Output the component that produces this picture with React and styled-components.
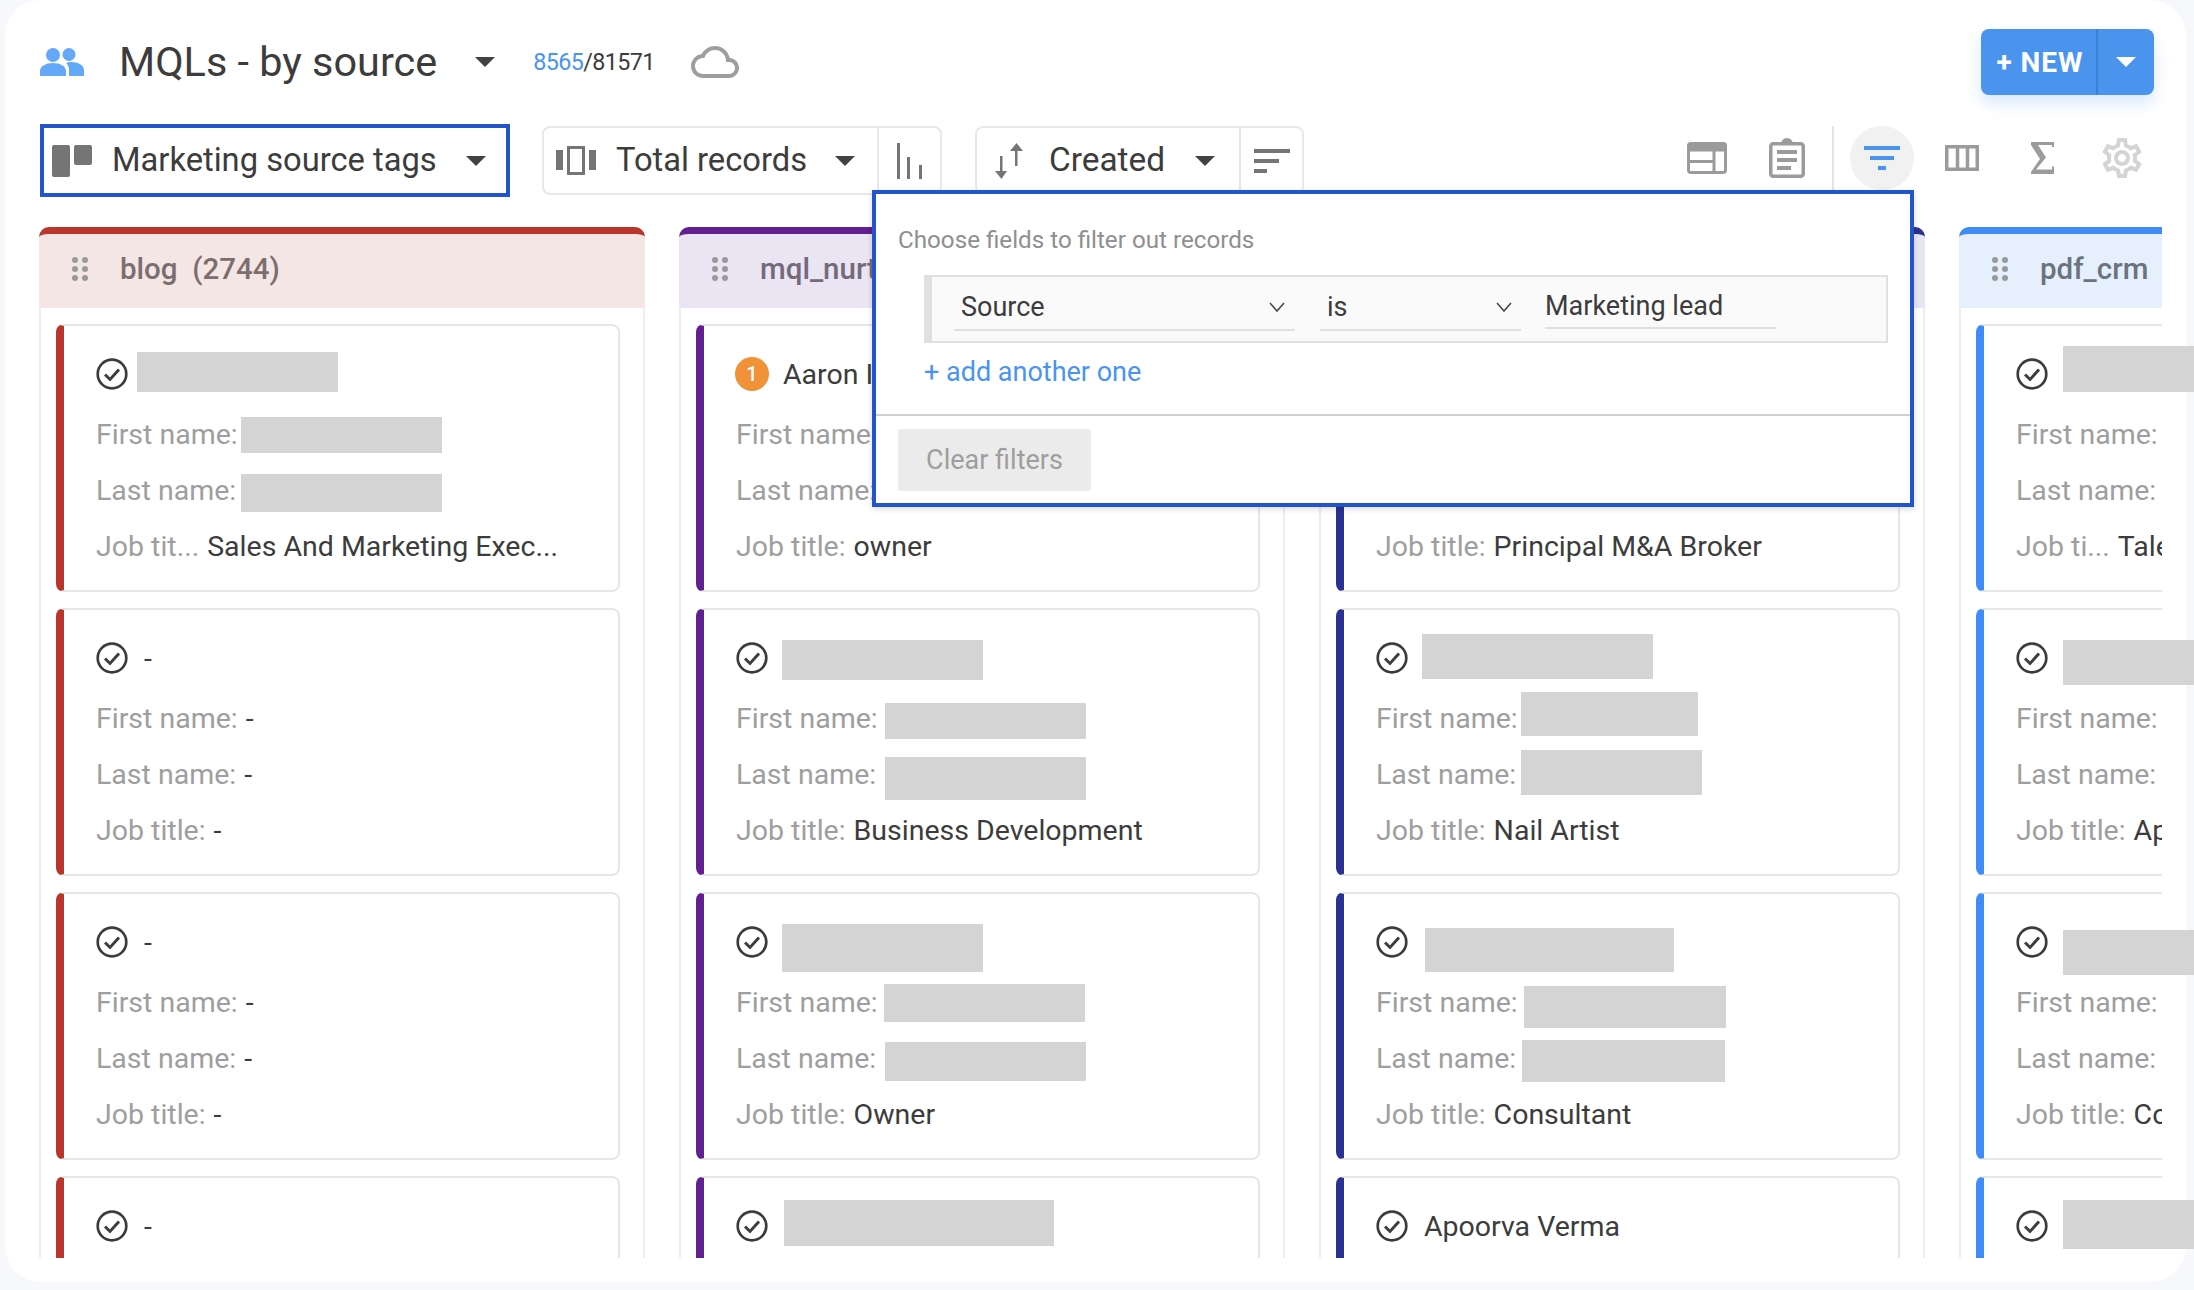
import React from "react";
import styled, { createGlobalStyle } from "styled-components";
import { MdOutlineSettings, MdCloudQueue } from "react-icons/md";

const Global = createGlobalStyle`
  html, body { margin: 0; padding: 0; background: #f7f8fc; }
  body { font-family: Roboto, "Liberation Sans", sans-serif; color: #3c3c3c; }
  * { box-sizing: border-box; }
`;

const Page = styled.div`
  position: relative;
  width: 2181px;
  height: 1282px;
  margin-left: 5px;
  padding-top: 29px;
  background: #fff;
  border-radius: 36px;
`;
const Frame = styled.div`
  width: 2194px;
  height: 1290px;
  overflow: hidden;
  position: relative;
`;
const Header = styled.header`
  display: flex;
  align-items: center;
  height: 66px;
  padding: 0 32px 0 35px;
`;
const Title = styled.h1`
  margin: 0 0 0 35px;
  font-size: 41.4px;
  font-weight: 400;
  color: #3c3c3c;
`;
const Counter = styled.div`
  margin-left: 38px;
  font-size: 23.3px;
  letter-spacing: -0.6px;
  color: #3c3c3c;
  span { color: #4a94ee; }
`;
const CloudWrap = styled.div`
  display: flex;
  margin-left: 36px;
  color: #9e9e9e;
`;
const NewButton = styled.div`
  display: flex;
  align-items: center;
  margin-left: auto;
  width: 173px;
  height: 66px;
  background: #4a94ee;
  border-radius: 8px;
  box-shadow: 0 8px 16px rgba(74, 148, 238, 0.22);
  color: #fff;
  font-size: 28px;
  font-weight: 700;
`;
const NewLabel = styled.div`
  width: 117px;
  height: 100%;
  display: flex;
  align-items: center;
  justify-content: center;
  padding-left: 3px;
  letter-spacing: 1px;
  border-right: 2px solid rgba(40, 90, 160, 0.35);
`;
const NewArrow = styled.div`
  flex: 1;
  display: flex;
  align-items: center;
  justify-content: center;
`;
const Caret = styled.span`
  display: inline-block;
  width: 0;
  height: 0;
  flex: none;
  border-left: 10px solid transparent;
  border-right: 10px solid transparent;
  border-top: 10px solid ${(p) => p.$color || "#424242"};
  margin-left: ${(p) => p.$ml || 0}px;
`;
const Toolbar = styled.div`
  display: flex;
  align-items: center;
  height: 73px;
  margin-top: 29px;
  padding: 0 24px 0 35px;
  gap: 32px;
`;
const Picker = styled.div`
  display: flex;
  align-items: center;
  width: 470px;
  height: 73px;
  padding-left: 8px;
  border: 4px solid #2255cc;
  font-size: 32.7px;
`;
const Group = styled.div`
  display: flex;
  align-items: stretch;
  height: 69px;
  width: ${(p) => p.$w}px;
  margin-left: ${(p) => p.$ml || 0}px;
  border: 2px solid #e8e8e8;
  border-radius: 8px;
  font-size: ${(p) => p.$fs}px;
`;
const GroupMain = styled.div`
  display: flex;
  align-items: center;
  flex: 1;
  padding-left: ${(p) => p.$pl}px;
`;
const GroupEnd = styled.div`
  display: flex;
  align-items: center;
  justify-content: center;
  width: ${(p) => p.$w}px;
  border-left: 2px solid #e8e8e8;
`;
const GroupLabel = styled.span`
  margin: -2px 0 0 ${(p) => p.$ml}px;
`;
const Actions = styled.div`
  display: flex;
  align-items: center;
  height: 64px;
  margin: 0 0 5px auto;
`;
const Slot = styled.div`
  display: flex;
  align-items: center;
  justify-content: center;
  width: 80px;
  height: 64px;
`;
const ActionDivider = styled.div`
  width: 2px;
  height: 64px;
  margin: 0 16px 0 5px;
  background: #e4e4e4;
`;
const FilterSlot = styled.div`
  display: flex;
  align-items: center;
  justify-content: center;
  width: 64px;
  height: 64px;
  margin-right: 8px;
  border-radius: 50%;
  background: #f1f1f1;
`;
const Board = styled.div`
  display: flex;
  align-items: flex-start;
  gap: 34px;
  width: 2123px;
  height: 1031px;
  margin: 30px 0 0 34px;
  overflow: hidden;
`;
const Column = styled.section`
  flex: none;
  width: 606px;
  height: 1300px;
  border: solid #eeeeee;
  border-width: 0 2px;
  border-radius: 10px 10px 0 0;
`;
const ColumnHead = styled.div`
  display: flex;
  align-items: center;
  height: 81px;
  margin: 0 -2px;
  padding: 0 0 4px 33px;
  background: ${(p) => p.$bg};
  border-top: 7px solid ${(p) => p.$color};
  border-radius: 10px 10px 0 0;
  color: ${(p) => p.$text};
  font-size: 29.5px;
  font-weight: 500;
`;
const ColumnName = styled.span`
  margin-left: 32px;
  white-space: pre;
`;
const CardList = styled.div`
  display: flex;
  flex-direction: column;
  gap: 16px;
  padding: 16px 23px 0 15px;
`;
const Card = styled.article`
  flex: none;
  height: 268px;
  padding: 28px 10px 0 33px;
  background: #fff;
  border: 2px solid #e6e6e6;
  border-left: 8px solid ${(p) => p.$color};
  border-radius: 8px;
  font-size: 28.5px;
`;
const CardTitle = styled.div`
  display: flex;
  align-items: center;
  gap: 16px;
  height: 40px;
  margin: 0 0 12px -1px;
  white-space: nowrap;
`;
const Badge = styled.span`
  display: flex;
  align-items: center;
  justify-content: center;
  flex: none;
  width: 34px;
  height: 34px;
  margin: 0 -2px 0 -1px;
  border-radius: 50%;
  background: #ef9238;
  color: #fff;
  font-size: 20px;
  font-weight: 500;
`;
const Field = styled.div`
  display: flex;
  align-items: center;
  gap: 8px;
  height: 56px;
  margin-left: -1px;
  white-space: nowrap;
`;
const Label = styled.span`
  color: #9e9e9e;
`;
const Redaction = styled.div.attrs((p) => ({
  style: { left: p.$x - 5, top: p.$y, width: p.$w, height: p.$h },
}))`
  position: absolute;
  background: #d4d4d4;
`;
const Popover = styled.div`
  position: absolute;
  left: 867px;
  top: 190px;
  width: 1042px;
  height: 317px;
  background: #fff;
  border: 4px solid #2255cc;
  box-shadow: 0 2px 6px rgba(0, 0, 0, 0.15);
`;
const PopoverBody = styled.div`
  height: 222px;
  padding: 31px 22px 0 22px;
  border-bottom: 2px solid #d0d0d0;
`;
const Hint = styled.div`
  font-size: 24.2px;
  line-height: 30px;
  color: #8f8f8f;
`;
const FilterRow = styled.div`
  display: flex;
  align-items: stretch;
  height: 68px;
  margin: 20px 0 0 26px;
  padding: 0 0 0 22px;
  background: #fafafa;
  border: 2px solid #e0e0e0;
  border-left-width: 8px;
  font-size: 27px;
`;
const SelectField = styled.div`
  display: flex;
  align-items: center;
  justify-content: space-between;
  width: ${(p) => p.$w}px;
  height: 54px;
  margin-right: ${(p) => p.$mr}px;
  padding: 7px ${(p) => p.$pr}px 0 7px;
  border-bottom: 2px solid #e0e0e0;
`;
const ValueField = styled.div`
  display: flex;
  align-items: center;
  width: 231px;
  height: 52px;
  padding-top: 7px;
  border-bottom: 2px solid #e0e0e0;
`;
const AddLink = styled.div`
  margin: 12px 0 0 26px;
  font-size: 27px;
  line-height: 34px;
  color: #4a94ee;
`;
const PopoverFoot = styled.div`
  padding: 13px 22px;
`;
const ClearButton = styled.div`
  display: flex;
  align-items: center;
  justify-content: center;
  width: 193px;
  height: 62px;
  background: #ebebeb;
  border-radius: 3px;
  color: #9e9e9e;
  font-size: 27px;
`;

const GRAY = "#757575";
const ICON = "#9b9b9b";

const PeopleIcon = () => (
  <svg width="44" height="28" viewBox="0 0 44 28" fill="#64a8f8">
    <circle cx="13" cy="7" r="7" />
    <circle cx="29" cy="6.5" r="6.5" />
    <path d="M0 28v-5c0-5 6-8 13-8s13 3 13 8v5z" />
    <path d="M29 28v-6c0-3-1-5-3-7 1-.5 3-1 5-1 7 0 13 3 13 8v6z" />
  </svg>
);
const BoardIcon = () => (
  <svg width="40" height="32" viewBox="0 0 40 32" fill={GRAY}>
    <rect x="0" y="0" width="18" height="32" rx="2" />
    <rect x="22" y="0" width="18" height="20" rx="2" />
  </svg>
);
const CarouselIcon = () => (
  <svg width="40" height="30" viewBox="0 0 40 30" fill={GRAY}>
    <rect x="0" y="4" width="7" height="20" />
    <rect x="33" y="4" width="7" height="20" />
    <rect x="12.5" y="1.5" width="15" height="26" fill="none" stroke={GRAY} strokeWidth="3" />
  </svg>
);
const BarsIcon = () => (
  <svg width="26" height="36" viewBox="0 0 26 36" fill={GRAY}>
    <rect x="0" y="0" width="3" height="36" />
    <rect x="10" y="14" width="3" height="22" />
    <rect x="22" y="22" width="3" height="14" />
  </svg>
);
const SortIcon = () => (
  <svg width="28" height="36" viewBox="0 0 28 36" fill={GRAY}>
    <path d="M5 13h2.5v15H12l-5.5 8L0 28h5z" />
    <path d="M20 23h2.500V8H28L21.500 0 15 8h5z" />
  </svg>
);
const LinesIcon = ({ color, w, h, bar, steps, gap, centered }) => (
  <svg width={w} height={h} viewBox={`0 0 ${w} ${h}`} fill={color}>
    {steps.map((s, i) => (
      <rect key={i} x={centered ? (w - s) / 2 : 0} y={i * gap} width={s} height={bar} />
    ))}
  </svg>
);
const LayoutIcon = () => (
  <svg width="40" height="32" viewBox="0 0 40 32">
    <rect x="1.500" y="1.500" width="37" height="29" rx="2.500" fill="none" stroke={ICON} strokeWidth="3" />
    <rect x="0.500" y="0.500" width="39" height="9" rx="2.500" fill={ICON} />
    <path d="M1 19.500h26M27 9v22" stroke={ICON} strokeWidth="3" />
  </svg>
);
const ClipboardIcon = () => (
  <svg width="36" height="40" viewBox="0 0 36 40">
    <rect x="1.750" y="5.750" width="32.500" height="32.500" rx="2.500" fill="none" stroke={ICON} strokeWidth="3.500" />
    <path d="M12 6a6 6 0 0 1 12 0z" fill={ICON} />
    <path d="M8 14h20M8 22h20M8 30h14" stroke={ICON} strokeWidth="4" />
  </svg>
);
const ColumnsIcon = () => (
  <svg width="34" height="26" viewBox="0 0 34 26" fill="none" stroke={ICON} strokeWidth="3.500">
    <rect x="1.750" y="1.750" width="30.500" height="22.500" />
    <path d="M12.500 2v22M22.500 2v22" />
  </svg>
);
const SigmaIcon = () => (
  <svg width="23" height="32" viewBox="0 0 23 32" fill={ICON}>
    <path d="M0 0H23V5H21V3H7L15 15.500L5 27.500H21V24.500H23V32H0V30L9 17L0 3Z" />
  </svg>
);
const CheckIcon = () => (
  <svg width="32" height="32" viewBox="0 0 32 32" fill="none" stroke="#3c3c3c" style={{ flex: "none" }}>
    <circle cx="16" cy="16" r="14.300" strokeWidth="2.700" />
    <path d="M9 16.500l5 5 9-10" strokeWidth="2.900" />
  </svg>
);
const Dots = () => (
  <svg width="16" height="24" viewBox="0 0 16 24" fill="#9a9a9a" style={{ flex: "none" }}>
    {[3, 12, 21].map((y) => (
      <React.Fragment key={y}>
        <circle cx="3" cy={y} r="3" />
        <circle cx="13" cy={y} r="3" />
      </React.Fragment>
    ))}
  </svg>
);
const Chevron = () => (
  <svg width="16" height="10" viewBox="0 0 16 10" fill="none" stroke="#4a4a4a" strokeWidth="1.600">
    <path d="M1 1l7 8 7-8" />
  </svg>
);

const blank = { first: "", last: "" };
const columns = [
  {
    key: "blog", name: "blog  (2744)", color: "#b9352e", bg: "#f5e6e6", text: "#7c6e6e",
    cards: [
      { first: "", last: "", jobLabel: "Job tit...", job: "Sales And Marketing Exec..." },
      { title: "-", first: "-", last: "-", job: "-" },
      { title: "-", first: "-", last: "-", job: "-" },
      { title: "-", titleOnly: true },
    ],
  },
  {
    key: "mql", name: "mql_nurture", color: "#611f91", bg: "#ebe4f2", text: "#736b7c",
    cards: [
      { badge: true, title: "Aaron I", ...blank, job: "owner" },
      { ...blank, job: "Business Development" },
      { ...blank, job: "Owner" },
      { titleOnly: true },
    ],
  },
  {
    key: "third", name: "", color: "#2b3190", bg: "#e6e7f3", text: "#6b6e7c",
    cards: [
      { ...blank, job: "Principal M&A Broker" },
      { ...blank, job: "Nail Artist" },
      { ...blank, job: "Consultant" },
      { title: "Apoorva Verma", titleOnly: true },
    ],
  },
  {
    key: "pdf", name: "pdf_crm", color: "#3f8cf7", bg: "#e6f0fc", text: "#6b7380",
    cards: [
      { ...blank, jobLabel: "Job ti...", job: "Tale" },
      { ...blank, job: "App" },
      { ...blank, job: "Con" },
      { titleOnly: true },
    ],
  },
];

const redactions = [
  [137, 352, 201, 40], [241, 417, 201, 36], [241, 474, 201, 38],
  [782, 640, 201, 40], [885, 703, 201, 36], [885, 757, 201, 43],
  [782, 924, 201, 48], [884, 984, 201, 38], [885, 1042, 201, 39],
  [784, 1200, 270, 46],
  [1422, 634, 231, 45], [1521, 692, 177, 44], [1521, 750, 181, 45],
  [1425, 928, 249, 44], [1524, 986, 202, 42], [1522, 1040, 203, 42],
  [2063, 346, 131, 46], [2063, 640, 131, 45], [2063, 930, 131, 45], [2063, 1200, 131, 49],
];

export default function App() {
  return (
    <Frame>
      <Global />
      <Page>
        <Header>
          <PeopleIcon />
          <Title>MQLs - by source</Title>
          <Caret $ml={38} />
          <Counter>
            <span>8565</span>/81571
          </Counter>
          <CloudWrap>
            <MdCloudQueue size={48} />
          </CloudWrap>
          <NewButton>
            <NewLabel>+ NEW</NewLabel>
            <NewArrow>
              <Caret $color="#fff" />
            </NewArrow>
          </NewButton>
        </Header>
        <Toolbar>
          <Picker>
            <BoardIcon />
            <GroupLabel $ml={20}>Marketing source tags</GroupLabel>
            <Caret $ml={29} />
          </Picker>
          <Group $w={400} $fs={32.7}>
            <GroupMain $pl={12}>
              <CarouselIcon />
              <GroupLabel $ml={20}>Total records</GroupLabel>
              <Caret $ml={28} />
            </GroupMain>
            <GroupEnd $w={63}>
              <BarsIcon />
            </GroupEnd>
          </Group>
          <Group $w={329} $ml={1} $fs={33.4}>
            <GroupMain $pl={18}>
              <SortIcon />
              <GroupLabel $ml={26}>Created</GroupLabel>
              <Caret $ml={30} />
            </GroupMain>
            <GroupEnd $w={63}>
              <LinesIcon color={GRAY} w={36} h={24} bar={4} gap={10} steps={[36, 25, 13]} />
            </GroupEnd>
          </Group>
          <Actions>
            <Slot><LayoutIcon /></Slot>
            <Slot><ClipboardIcon /></Slot>
            <ActionDivider />
            <FilterSlot>
              <LinesIcon color="#4a94ee" w={36} h={24} bar={4} gap={10} steps={[36, 24, 8]} centered />
            </FilterSlot>
            <Slot><ColumnsIcon /></Slot>
            <Slot><SigmaIcon /></Slot>
            <Slot><MdOutlineSettings size={48} color="#d4d4d4" /></Slot>
          </Actions>
        </Toolbar>
        <Board>
          {columns.map((col) => (
            <Column key={col.key}>
              <ColumnHead $color={col.color} $bg={col.bg} $text={col.text}>
                <Dots />
                <ColumnName>{col.name}</ColumnName>
              </ColumnHead>
              <CardList>
                {col.cards.map((c, i) => (
                  <Card key={i} $color={col.color}>
                    <CardTitle>
                      {c.badge ? <Badge>1</Badge> : <CheckIcon />}
                      {c.title && <span>{c.title}</span>}
                    </CardTitle>
                    {!c.titleOnly && (
                      <>
                        <Field><Label>First name:</Label><span>{c.first}</span></Field>
                        <Field><Label>Last name:</Label><span>{c.last}</span></Field>
                        <Field><Label>{c.jobLabel || "Job title:"}</Label><span>{c.job}</span></Field>
                      </>
                    )}
                  </Card>
                ))}
              </CardList>
            </Column>
          ))}
        </Board>
        {redactions.map(([x, y, w, h]) => (
          <Redaction key={`${x}-${y}`} $x={x} $y={y} $w={w} $h={h} />
        ))}
        <Popover>
          <PopoverBody>
            <Hint>Choose fields to filter out records</Hint>
            <FilterRow>
              <SelectField $w={341} $mr={25} $pr={10}>Source<Chevron /></SelectField>
              <SelectField $w={201} $mr={24} $pr={9}>is<Chevron /></SelectField>
              <ValueField>Marketing lead</ValueField>
            </FilterRow>
            <AddLink>+ add another one</AddLink>
          </PopoverBody>
          <PopoverFoot>
            <ClearButton>Clear filters</ClearButton>
          </PopoverFoot>
        </Popover>
      </Page>
    </Frame>
  );
}
